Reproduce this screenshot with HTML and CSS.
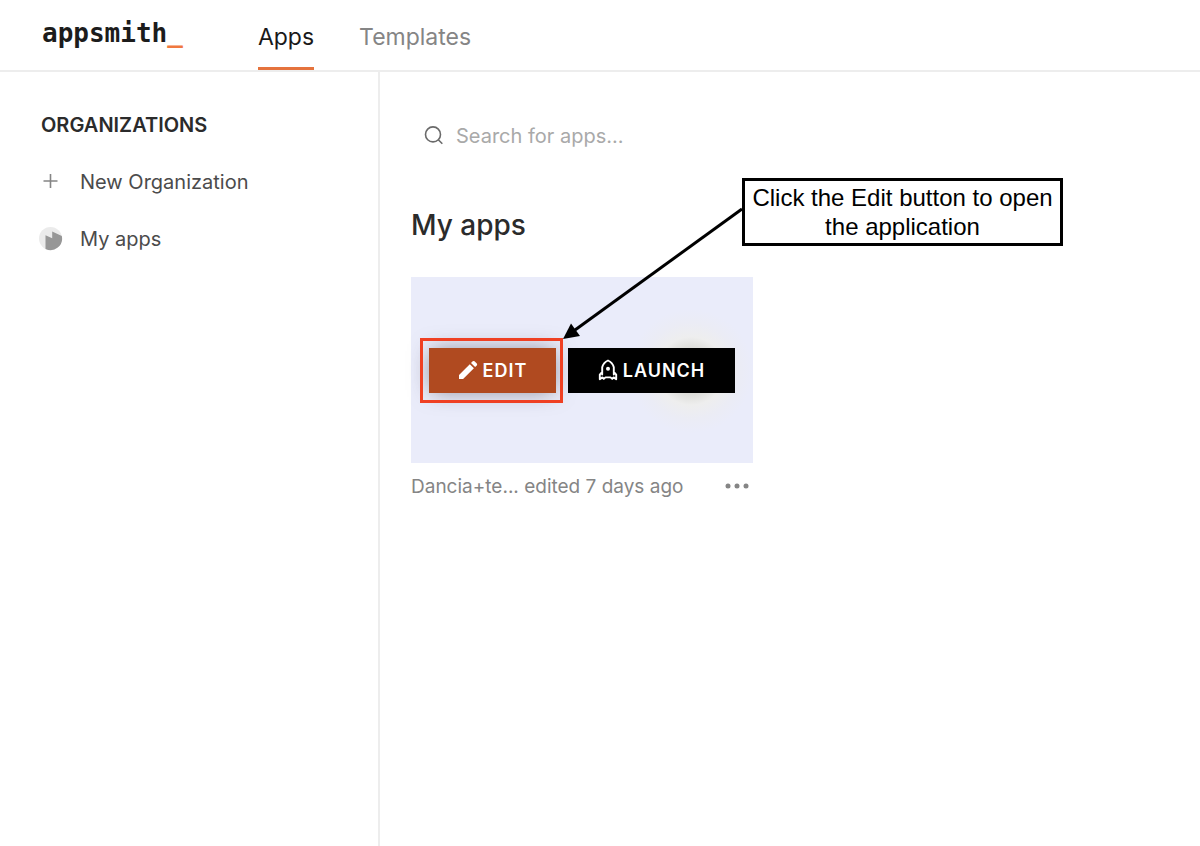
FILE: index.html
```html
<!DOCTYPE html>
<html lang="en">
<head>
<meta charset="utf-8">
<title>Apps</title>
<link rel="stylesheet" href="styles.css">
</head>
<body>
<header class="topbar">
  <a class="logo" href="#">appsmith<span class="logo-cursor">_</span></a>
  <nav class="tabs">
    <a class="tab tab-active" href="#">Apps</a>
    <a class="tab" href="#">Templates</a>
  </nav>
</header>
<div class="layout">
  <aside class="sidebar">
    <h2 class="sidebar-title">ORGANIZATIONS</h2>
    <a class="side-link" href="#">
      <svg class="side-icon" viewBox="0 0 24 24" aria-hidden="true"><path d="M11.500 4v14M4.500 11h14" stroke="#858585" stroke-width="1.600" fill="none"/></svg>
      New Organization
    </a>
    <a class="side-link" href="#">
      <svg class="side-icon" viewBox="0 0 24 24" aria-hidden="true"><circle cx="11.500" cy="11.500" r="11.500" fill="#ebebeb"/><path d="M6.500 8.200V21.900A11.500 11.500 0 0 0 22.800 9.100L13.200 4.400v6.800z" fill="#979797"/></svg>
      My apps
    </a>
  </aside>
  <main class="content">
    <label class="search">
      <svg class="search-icon" viewBox="0 0 20 20" aria-hidden="true"><circle cx="9" cy="8.400" r="7.500"/><path d="M14.300 13.700l4 4"/></svg>
      <input class="search-input" type="text" placeholder="Search for apps..." aria-label="Search for apps">
    </label>
    <h1 class="heading">My apps</h1>
    <article class="card">
      <div class="preview">
        <button class="btn btn-edit" type="button">
          <svg class="btn-icon" viewBox="0 0 20 20" aria-hidden="true"><path fill="#fff" d="M1 15L11.800 4.200l4.100 4.100L5.100 19H1zM13 3l1.700-1.700q.9-.8 1.800 0l2.300 2.300q.8.9 0 1.800l-1.700 1.700z"/></svg>
          EDIT
        </button>
        <button class="btn btn-launch" type="button">
          <svg class="btn-icon btn-icon-tall" viewBox="0 0 20 22" aria-hidden="true"><path fill="none" stroke="#fff" stroke-width="1.900" stroke-linejoin="round" stroke-linecap="round" d="M4.200 13V8.200Q5.600 3.400 10 1.500q4.400 1.900 5.800 6.700V13l2.400 2.600v4.600l-2.600-1.800-1.400 1.500-1.700-1.500H7.500l-1.700 1.500-1.400-1.500-2.600 1.800v-4.600zM4.200 13v2.500M15.800 13v2.500"/><circle cx="10" cy="9.800" r="2" fill="#fff"/></svg>
          LAUNCH
        </button>
      </div>
      <footer class="card-footer">
        <span class="card-meta">Dancia+te... edited 7 days ago</span>
        <button class="more" type="button" aria-label="More options">
          <svg class="more-icon" viewBox="0 0 24 6" aria-hidden="true"><g fill="#858585"><circle cx="3" cy="3" r="2.500"/><circle cx="12" cy="3" r="2.500"/><circle cx="21" cy="3" r="2.500"/></g></svg>
        </button>
      </footer>
      <div class="highlight"></div>
      <svg class="arrow" viewBox="0 0 182 134" aria-hidden="true"><path d="M180 3L13 124" stroke="#000" stroke-width="3"/><path d="M1 133l8-15.500 9 12.500z"/></svg>
      <p class="callout">Click the Edit button to open the application</p>
    </article>
  </main>
</div>
</body>
</html>
```
FILE: styles.css
```css
* { box-sizing: border-box; }
body {
  margin: 0;
  min-height: 100vh;
  display: flex;
  flex-direction: column;
  background: #fff;
  color: #2b2b2b;
  font-family: Inter, "Liberation Sans", sans-serif;
}
a { color: inherit; text-decoration: none; }
button { border: 0; font-family: inherit; cursor: pointer; }
svg { flex: none; display: block; }

.topbar {
  display: flex;
  align-items: stretch;
  gap: 75px;
  height: 72px;
  padding: 0 42px;
  border-bottom: 2px solid #ededed;
}
.logo {
  padding-top: 18px;
  font: bold 26px/30px "DejaVu Sans Mono", monospace;
  color: #1c1c1c;
}
.logo-cursor { color: #f0783f; }
.tabs { display: flex; gap: 45px; }
.tab {
  padding-top: 22px;
  font-size: 23px;
  line-height: 30px;
  color: #858585;
}
.tab-active { color: #191919; border-bottom: 3px solid #e5733d; }

.layout { flex: 1; display: flex; }
.sidebar {
  flex: none;
  width: 380px;
  padding: 41px 39px;
  border-right: 2px solid #ededed;
}
.sidebar-title {
  margin: 0 0 28px;
  padding-left: 2px;
  font-size: 20px;
  line-height: 24px;
  font-weight: 600;
}
.side-link {
  display: flex;
  align-items: center;
  gap: 17px;
  height: 33px;
  margin-bottom: 24px;
  font-size: 20px;
  color: #4b4b4b;
}
.side-icon { width: 24px; height: 24px; }

.content { flex: 1; padding: 40px 31px; }
.search {
  display: flex;
  align-items: center;
  gap: 12px;
  height: 48px;
  padding-left: 13px;
}
.search-icon { width: 20px; height: 20px; fill: none; stroke: #6a6a6a; stroke-width: 1.6; }
.search-input {
  flex: 1;
  border: 0;
  outline: 0;
  padding: 0;
  font-family: inherit;
  font-size: 20px;
}
.search-input::placeholder { color: #a9a9a9; }
.heading {
  margin: 47px 0 34px;
  font-size: 28px;
  line-height: 36px;
  font-weight: 500;
}

.card { position: relative; width: 342px; }
.preview {
  display: flex;
  align-items: center;
  justify-content: center;
  gap: 12px;
  height: 186px;
  background:
    radial-gradient(circle at 280px 94px, #b0b0a8 0, #dcdcd8 22px, #eeeeee 34px, #ebecf5 48px, #eaecfa 62px),
    #eaecfa;
}
.btn {
  display: flex;
  align-items: center;
  justify-content: center;
  gap: 5px;
  height: 45px;
  padding: 0;
  font-size: 18px;
  font-weight: 600;
  letter-spacing: 1px;
  color: #fff;
}
.btn-edit {
  width: 127px;
  background: #b04a20;
  box-shadow: 0 0 22px -3px rgba(60, 60, 70, 0.6);
}
.btn-launch { width: 167px; background: #000; }
.btn-icon { width: 20px; height: 20px; }
.btn-icon-tall { height: 22px; }
.card-footer {
  display: flex;
  align-items: center;
  justify-content: space-between;
  height: 46px;
}
.card-meta { font-size: 19px; color: #858585; }
.more { padding: 4px; background: none; }
.more-icon { width: 24px; height: 6px; }

.highlight {
  position: absolute;
  left: 9px;
  top: 61px;
  width: 143px;
  height: 65px;
  border: 3px solid #ef4023;
}
.arrow { position: absolute; left: 151px; top: -71px; width: 182px; height: 134px; }
.callout {
  position: absolute;
  left: 331px;
  top: -99px;
  width: 321px;
  margin: 0;
  padding: 2px 4px;
  border: 3px solid #000;
  background: #fff;
  color: #000;
  font: 24px/29px "Liberation Sans", Arial, sans-serif;
  text-align: center;
}
```
